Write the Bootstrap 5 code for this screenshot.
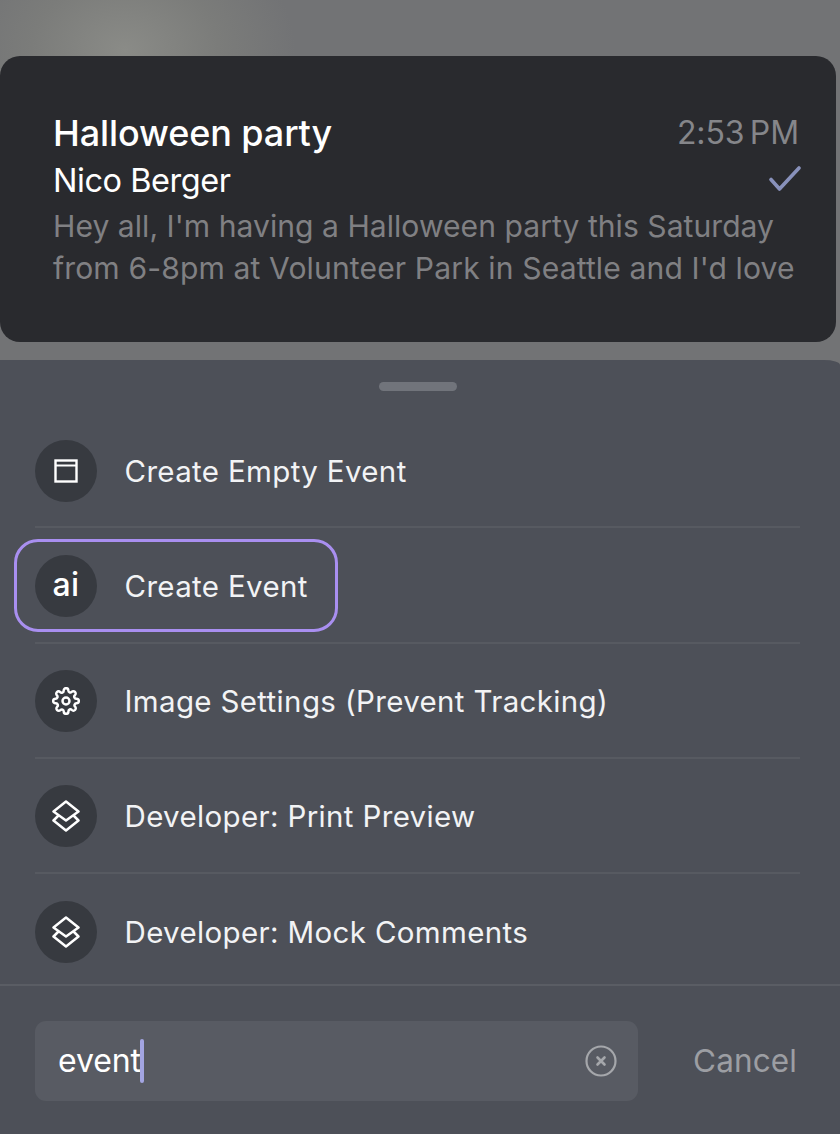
<!DOCTYPE html>
<html lang="en">
<head>
<meta charset="utf-8">
<title>Command sheet</title>
<link href="https://cdn.jsdelivr.net/npm/bootstrap@5.3.0/dist/css/bootstrap.min.css" rel="stylesheet">
<style>
html,body{height:100%;margin:0}
body{width:840px;height:1134px;overflow:hidden;font-family:Inter,"Liberation Sans",sans-serif;background:radial-gradient(ellipse 170px 130px at 125px 50px,#8a8b87 0,#7b7c7a 55%,#727375 100%),#707173;background-repeat:no-repeat;background-color:#717274;padding-top:56px}
.msg-card{width:836px;height:286px;background:#292a2e;border-radius:20px;padding:56px 37px 0 53px;margin-bottom:18px}
.msg-title{font-size:36px;line-height:42px;font-weight:500;color:#fff;letter-spacing:-.1px}
.msg-time{font-size:32px;line-height:42px;color:#85868a;letter-spacing:-.1px;word-spacing:-3.5px}
.msg-from{font-size:32.5px;line-height:44px;color:#fff;letter-spacing:-.45px;margin-top:5px}
.msg-body{font-size:30.1px;line-height:42px;color:#808083;letter-spacing:.03px;white-space:nowrap}
.msg-lead{margin-top:2px}
.msg-tail{letter-spacing:.12px}
.check-mark{width:32px;height:26px;margin-right:-2px}
.sheet{height:774px;background:#4d5058;border-radius:0 16px 0 0/0 5px 0 0;overflow:hidden}
.grab-wrap{padding:22px 4px 0 0;height:53px}
.grab{width:78px;height:9px;border-radius:5px;background:#71747b}
.cmd-list{height:571px;overflow:hidden;padding:0 40px 0 35px}
.cmd-row{height:115.25px;border-bottom:2px solid #575a61;color:#f2f3f5;font-size:29.5px;letter-spacing:.35px;background:transparent;padding:2px 0 0}
.cmd-row:last-child{border-bottom-color:transparent}
.cmd-focus{margin-left:-21px;padding:0 27px 0 18px;height:93px;border:3px solid #a98ff0;border-radius:24px}
.cmd-ico{width:62px;height:62px;border-radius:50%;background:#373a40;color:#fff;margin-right:27.5px}
.ai-mark{font-size:32px;font-weight:500;letter-spacing:.5px;line-height:1;margin-top:-2px}
.foot{border-top:2px solid #5a5d64;height:150px;padding:35px 43px 0 35px}
.search-box{width:603px;height:80px;background:#585b63;border-radius:11px;padding:0 21px 0 23px}
.search-text{font-size:32px;color:#fff;letter-spacing:-.1px;line-height:1}
.caret-bar{width:4px;height:44px;background:#a3a5e2;border-radius:2px;margin-left:-1px}
.cancel-txt{font-size:31.5px;color:#9c9ea3;letter-spacing:.1px}
</style>
</head>
<body>
<div class="msg-card">
  <div class="d-flex justify-content-between align-items-start">
    <div class="msg-title">Halloween party</div>
    <div class="msg-time">2:53 PM</div>
  </div>
  <div class="d-flex justify-content-between align-items-center">
    <div class="msg-from">Nico Berger</div>
    <svg class="check-mark" viewBox="0 0 32 26" fill="none" stroke="#8891bb" stroke-width="3.6" stroke-linecap="round" stroke-linejoin="round"><path d="M2 13.500 10.500 23 30 2"/></svg>
  </div>
  <div class="msg-body msg-lead">Hey all, I'm having a Halloween party this Saturday</div>
  <div class="msg-body msg-tail">from 6-8pm at Volunteer Park in Seattle and I'd love</div>
</div>
<div class="sheet d-flex flex-column">
  <div class="grab-wrap d-flex justify-content-center flex-shrink-0"><div class="grab"></div></div>
  <div class="cmd-list flex-shrink-0">
    <div class="cmd-row d-flex align-items-center">
      <span class="cmd-ico d-flex align-items-center justify-content-center flex-shrink-0">
        <svg width="24" height="24" viewBox="0 0 24 24" fill="none" stroke="#fff" stroke-width="2.400"><rect x="1.500" y="1.500" width="21" height="21"/><path d="M1.500 6.500h21" stroke-width="2"/></svg>
      </span>Create Empty Event
    </div>
    <div class="cmd-row d-flex align-items-center">
      <div class="cmd-focus d-flex align-items-center">
        <span class="cmd-ico d-flex align-items-center justify-content-center flex-shrink-0"><span class="ai-mark">ai</span></span>Create Event
      </div>
    </div>
    <div class="cmd-row d-flex align-items-center">
      <span class="cmd-ico d-flex align-items-center justify-content-center flex-shrink-0">
        <svg width="28" height="28" viewBox="0 0 24 24" fill="none" stroke="#fff" stroke-width="2.100" stroke-linejoin="round"><circle cx="12" cy="12" r="3"/><path d="M19.400 15a1.650 1.650 0 0 0 .33 1.820l.06.06a2 2 0 1 1-2.830 2.830l-.06-.06a1.650 1.650 0 0 0-2.820 1.170V21a2 2 0 1 1-4 0v-.09A1.650 1.650 0 0 0 7.260 19.740l-.06.06a2 2 0 1 1-2.830-2.830l.06-.06A1.650 1.650 0 0 0 3.260 14H3a2 2 0 1 1 0-4h.09A1.650 1.650 0 0 0 4.260 7.200l-.06-.06a2 2 0 1 1 2.830-2.830l.06.06A1.650 1.650 0 0 0 10 3.260V3a2 2 0 1 1 4 0v.09a1.650 1.650 0 0 0 2.820 1.170l.06-.06a2 2 0 1 1 2.830 2.830l-.06.06A1.650 1.650 0 0 0 20.910 10H21a2 2 0 1 1 0 4h-.09a1.650 1.650 0 0 0-1.510 1z"/></svg>
      </span>Image Settings (Prevent Tracking)
    </div>
    <div class="cmd-row d-flex align-items-center">
      <span class="cmd-ico d-flex align-items-center justify-content-center flex-shrink-0">
        <svg width="28" height="32" viewBox="0 0 28 32" fill="none" stroke="#fff" stroke-width="2.500" stroke-linejoin="round" stroke-linecap="round"><path d="M14 1.500 26.500 11.500 14 20.500 1.500 11.500z"/><path d="M6 16 1.500 20.500 14 30.500 26.500 20.500 22 16"/></svg>
      </span>Developer: Print Preview
    </div>
    <div class="cmd-row d-flex align-items-center">
      <span class="cmd-ico d-flex align-items-center justify-content-center flex-shrink-0">
        <svg width="28" height="32" viewBox="0 0 28 32" fill="none" stroke="#fff" stroke-width="2.500" stroke-linejoin="round" stroke-linecap="round"><path d="M14 1.500 26.500 11.500 14 20.500 1.500 11.500z"/><path d="M6 16 1.500 20.500 14 30.500 26.500 20.500 22 16"/></svg>
      </span>Developer: Mock Comments
    </div>
  </div>
  <div class="foot d-flex align-items-start justify-content-between">
    <div class="search-box d-flex align-items-center justify-content-between">
      <div class="d-flex align-items-center"><span class="search-text">event</span><span class="caret-bar"></span></div>
      <svg width="32" height="32" viewBox="0 0 32 32" fill="none" stroke="#a5a7ab" stroke-width="2.200" stroke-linecap="round"><circle cx="16" cy="16" r="14.500"/><path d="M12.500 12.500l7 7M19.500 12.500l-7 7" stroke-width="2.600"/></svg>
    </div>
    <div class="cancel-txt align-self-start mt-3">Cancel</div>
  </div>
</div>
<script src="https://cdn.jsdelivr.net/npm/bootstrap@5.3.0/dist/js/bootstrap.bundle.min.js"></script>
</body>
</html>
